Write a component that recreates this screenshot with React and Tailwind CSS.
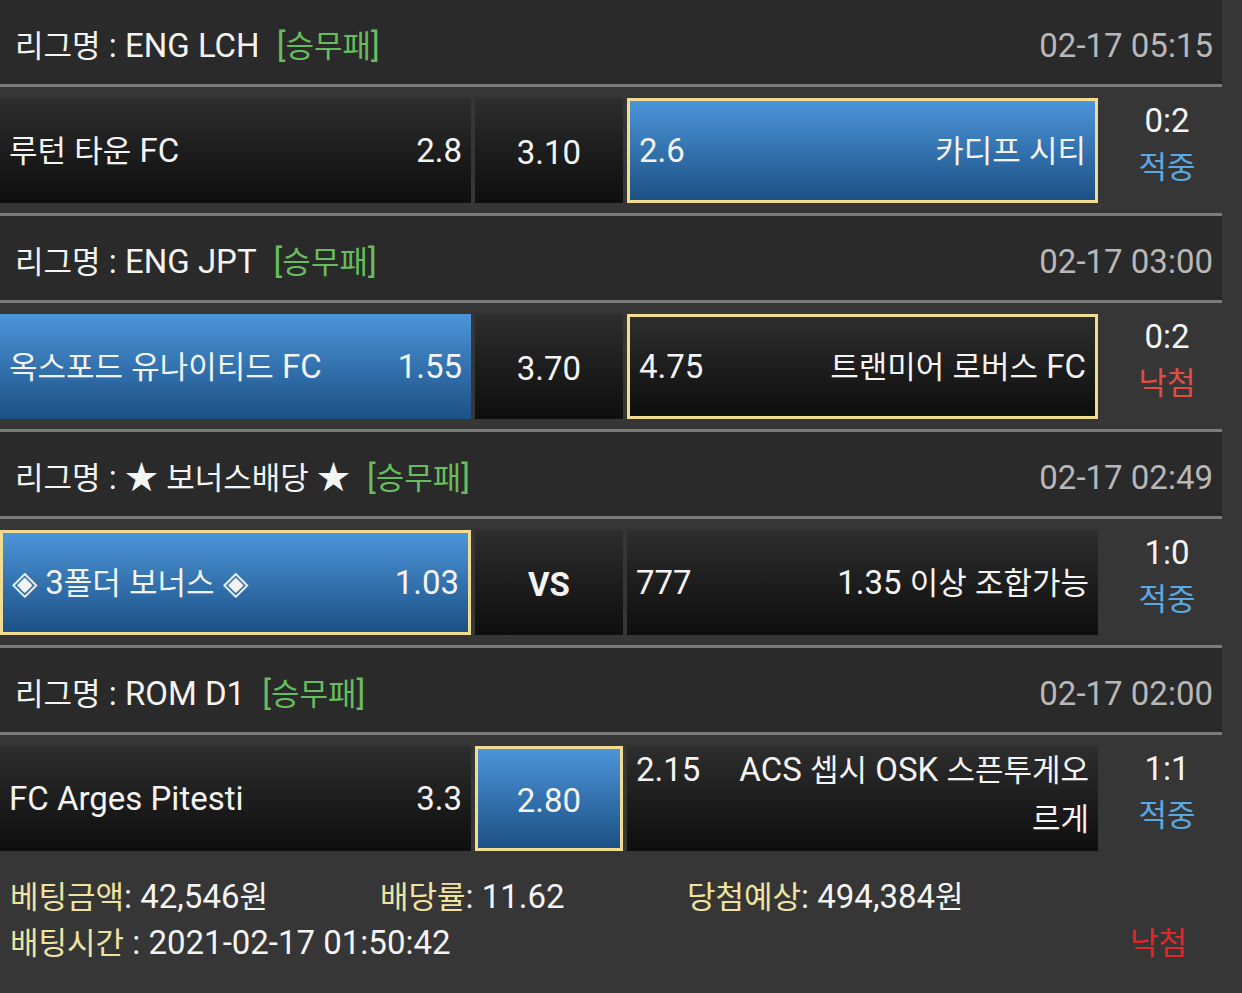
import React from 'react';

const HANGUL = /([\uAC00-\uD7A3\u3131-\u318E]+)/;

// hangul glyphs in the source are sized a little apart from the latin ones
function K({ text }) {
  return String(text).split(HANGUL).map((part, i) =>
    i % 2 ? <span key={i} className="text-[31px]">{part}</span> : part
  );
}

const MATCHES = [
  {
    league: 'ENG LCH', time: '02-17 05:15',
    home: { name: '루턴 타운 FC', odds: '2.8' }, draw: '3.10', away: { odds: '2.6', name: '카디프 시티' },
    pick: 'away', result: 'away', score: '0:2', status: '적중',
  },
  {
    league: 'ENG JPT', time: '02-17 03:00',
    home: { name: '옥스포드 유나이티드 FC', odds: '1.55' }, draw: '3.70', away: { odds: '4.75', name: '트랜미어 로버스 FC' },
    pick: 'away', result: 'home', score: '0:2', status: '낙첨',
  },
  {
    league: '★ 보너스배당 ★', time: '02-17 02:49',
    home: { name: '◈ 3폴더 보너스 ◈', odds: '1.03' }, draw: 'VS', away: { odds: '777', name: '1.35 이상 조합가능' },
    pick: 'home', result: 'home', score: '1:0', status: '적중',
  },
  {
    league: 'ROM D1', time: '02-17 02:00',
    home: { name: 'FC Arges Pitesti', odds: '3.3' }, draw: '2.80', away: { odds: '2.15', name: ['ACS 셉시 OSK 스픈투게오', '르게'] },
    pick: 'draw', result: 'draw', score: '1:1', status: '적중', last: true,
  },
];

function cellClass(side, m) {
  const blue = m.result === side;
  const picked = m.pick === side;
  return [
    'h-[105px] flex px-[9px]',
    blue ? 'bg-linear-to-b from-[#4c95da] to-[#1c5185]' : 'bg-linear-to-b from-[#2e2e2e] to-[#0e0e0e]',
    picked ? 'border-[3px] border-[#f2dc92]' : '',
  ].join(' ');
}

function Section({ m }) {
  return (
    <div className="w-[1222px]">
      <div className="h-[84px] bg-[#2a2a2a] flex items-center pl-[15px] pr-[9px] pt-[6px]">
        <span className="text-[#f4f4f4] whitespace-pre"><K text={`리그명 : ${m.league}`} /></span>
        <span className="ml-[17px] text-[#66bd5d]"><K text="[승무패]" /></span>
        <span className="ml-auto text-[#b8b8b8]">{m.time}</span>
      </div>
      <div className="h-[3px] bg-[#7b7b7b]" />
      <div className={`flex pt-[11px] ${m.last ? '' : 'pb-[10px]'}`}>
        <div className={`w-[471px] items-center justify-between ${cellClass('home', m)}`}>
          <span><K text={m.home.name} /></span>
          <span>{m.home.odds}</span>
        </div>
        <div className={`w-[148px] ml-[4px] items-center justify-center pt-[4px] ${cellClass('draw', m)} ${m.draw === 'VS' ? 'font-bold' : ''}`}>
          {m.draw}
        </div>
        <div className={`w-[471px] ml-[4px] ${Array.isArray(m.away.name) ? 'items-start leading-[48px]' : 'items-center'} justify-between ${cellClass('away', m)}`}>
          <span>{m.away.odds}</span>
          {Array.isArray(m.away.name) ? (
            <span className="text-right">
              <K text={m.away.name[0]} /><br /><K text={m.away.name[1]} />
            </span>
          ) : (
            <span><K text={m.away.name} /></span>
          )}
        </div>
        <div className="flex-1 pl-[14px] flex flex-col items-center leading-[46px]">
          <span className="text-[#f4f4f4]">{m.score}</span>
          <span className={m.status === '적중' ? 'text-[#5ba8e2]' : 'text-[#e24c46]'}>
            <K text={m.status} />
          </span>
        </div>
      </div>
      {!m.last && <div className="h-[3px] bg-[#7b7b7b]" />}
    </div>
  );
}

export default function App() {
  return (
    <div
      className="w-[1242px] h-[993px] overflow-hidden bg-[#363636] text-[33px] text-[#f4f4f4] leading-none"
      style={{ fontFamily: 'Roboto, "Noto Sans CJK KR", sans-serif' }}
    >
      {MATCHES.map(m => <Section key={m.time} m={m} />)}

      {/* bet summary */}
      <div className="w-[1222px] pt-[23px] pl-[10px] pr-[35px] leading-[45px]">
        <div className="flex">
          <span className="w-[370px]"><span className="text-[#efe3a2]"><K text="베팅금액" /></span>: 42,546<K text="원" /></span>
          <span className="w-[307px]"><span className="text-[#efe3a2]"><K text="배당률" /></span>: 11.62</span>
          <span><span className="text-[#efe3a2]"><K text="당첨예상" /></span>: 494,384<K text="원" /></span>
        </div>
        <div className="flex justify-between">
          <span><span className="text-[#efe3a2]"><K text="배팅시간" /></span> : 2021-02-17 01:50:42</span>
          <span className="text-[#e0282a]"><K text="낙첨" /></span>
        </div>
      </div>
    </div>
  );
}
